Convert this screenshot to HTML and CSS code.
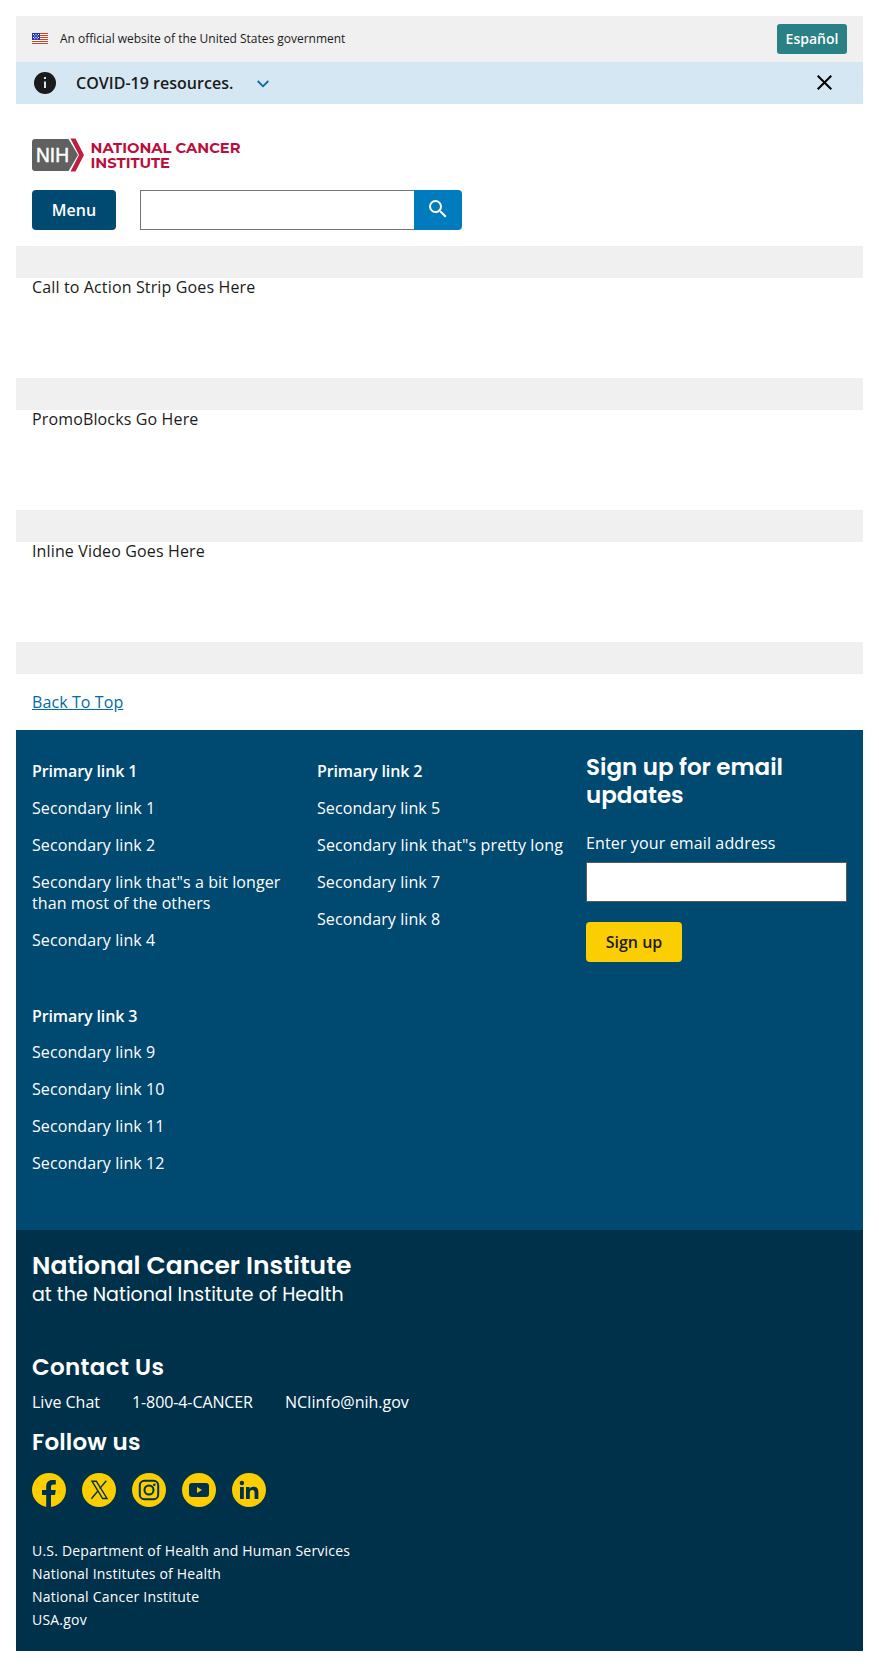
FILE: index.html
```html
<!DOCTYPE html>
<html lang="en">
<head>
<meta charset="utf-8">
<title>National Cancer Institute</title>
<link rel="stylesheet" href="styles.css">
</head>
<body>
<div class="page">
  <div class="banner">
    <svg class="flag" viewBox="0 0 16 11" shape-rendering="crispEdges"><path fill="#fff" d="M0 0h16v11H0z"/><path fill="#db3e1f" d="M0 0h16v1H0zM0 2h16v1H0zM0 4h16v1H0zM0 6h16v1H0zM0 8h16v1H0zM0 10h16v1H0z"/><path fill="#1e33b1" d="M0 0h8v7H0z"/><g fill="#fff" shape-rendering="auto"><path d="M1 1h1v1H1zM3.500 1h1v1h-1zM6 1h1v1H6zM2.200 2.500h1v1h-1zM4.700 2.500h1v1h-1zM1 4h1v1H1zM3.500 4h1v1h-1zM6 4h1v1H6zM2.200 5.300h1v1h-1zM4.700 5.300h1v1h-1z"/></g></svg>
    <span class="banner-text">An official website of the United States government</span>
    <a class="lang">Español</a>
  </div>
  <div class="alert">
    <svg class="info" viewBox="0 0 22 22"><circle cx="11" cy="11" r="11" fill="#1b1b1b"/><path fill="#d5e7f3" d="M10 5h2v2h-2zM10 9.500h2V16h-2z"/></svg>
    <span class="alert-title">COVID-19 resources.</span>
    <svg class="chevron" viewBox="0 0 12 8"><path d="M.7 1 6 6.300 11.300 1" fill="none" stroke="#006ba8" stroke-width="1.800"/></svg>
    <svg class="close" viewBox="0 0 15 15"><path d="m.7.7 13.600 13.600M14.300.7.7 14.300" stroke="#000" stroke-width="2"/></svg>
  </div>
  <header class="header">
    <svg class="logo" viewBox="0 0 210 34">
      <path fill="#606060" d="M3 1h33.500l9.500 16-9.500 16H3a3 3 0 0 1-3-3V4a3 3 0 0 1 3-3z"/>
      <path fill="#be1e3f" d="M38.500.500h5L52 17l-8.500 16.500h-5L47 17z"/>
      <text class="logo-nih" x="4" y="24" textLength="33" lengthAdjust="spacingAndGlyphs">NIH</text>
      <text class="logo-name" x="58.500" y="14.600" textLength="150" lengthAdjust="spacingAndGlyphs">NATIONAL CANCER</text>
      <text class="logo-name" x="58.500" y="30" textLength="79.500" lengthAdjust="spacingAndGlyphs">INSTITUTE</text>
    </svg>
    <div class="controls">
      <button class="btn menu">Menu</button>
      <div class="search">
        <input class="field search-field" type="text" aria-label="Search">
        <button class="search-btn" aria-label="Search"><svg viewBox="0 0 24 24" width="24" height="24"><path fill="#fff" d="M15.500 14h-.79l-.28-.27A6.470 6.470 0 0 0 16 9.500 6.500 6.500 0 1 0 9.500 16c1.610 0 3.090-.59 4.230-1.570l.27.28v.79l5 4.990L20.490 19l-4.990-5zm-6 0C7.010 14 5 11.990 5 9.500S7.010 5 9.500 5 14 7.010 14 9.500 11.990 14 9.500 14z"/></svg></button>
      </div>
    </div>
  </header>
  <main>
    <div class="strip"></div>
    <div class="slot">Call to Action Strip Goes Here</div>
    <div class="strip"></div>
    <div class="slot">PromoBlocks Go Here</div>
    <div class="strip"></div>
    <div class="slot">Inline Video Goes Here</div>
    <div class="strip"></div>
  </main>
  <footer>
    <div class="back"><a class="back-link" href="#">Back To Top</a></div>
    <div class="primary">
      <nav class="links">
        <ul class="group">
          <li class="group-title">Primary link 1</li><li>Secondary link 1</li><li>Secondary link 2</li><li>Secondary link that"s a bit longer than most of the others</li><li>Secondary link 4</li>
        </ul>
        <ul class="group">
          <li class="group-title">Primary link 2</li><li>Secondary link 5</li><li class="nowrap">Secondary link that"s pretty long</li><li>Secondary link 7</li><li>Secondary link 8</li>
        </ul>
        <ul class="group group-last">
          <li class="group-title">Primary link 3</li><li>Secondary link 9</li><li>Secondary link 10</li><li>Secondary link 11</li><li>Secondary link 12</li>
        </ul>
      </nav>
      <form class="signup">
        <h3 class="heading signup-title">Sign up for email updates</h3>
        <label class="label" for="email">Enter your email address</label>
        <input class="field email" id="email" type="text">
        <button class="btn submit" type="button">Sign up</button>
      </form>
    </div>
    <div class="secondary">
      <h3 class="heading org">National Cancer Institute</h3>
      <p class="parent">at the National Institute of Health</p>
      <h3 class="heading contact-title">Contact Us</h3>
      <div class="contact"><a>Live Chat</a><a class="phone">1-800-4-CANCER</a><a>NCIinfo@nih.gov</a></div>
      <h3 class="heading follow-title">Follow us</h3>
      <div class="social">
        <svg viewBox="0 0 34 34"><circle class="disc" cx="17" cy="17" r="17"/><path class="ink" d="M14.200 34V22H10v-5h4.200v-3.500c0-4.300 2.300-6.500 6.200-6.500h3.400v4.500h-2.300c-1.900 0-2.500 1-2.500 2.500v3h4.800l-.8 5h-4v12z"/></svg>
        <svg viewBox="0 0 34 34"><circle class="disc" cx="17" cy="17" r="17"/><path class="line" d="M10 8.200h4.300L25 25.500h-4.400z"/><path class="line" d="m24.300 7.800-6.600 7.800M15.600 18.200l-6.200 7.500"/></svg>
        <svg viewBox="0 0 34 34"><circle class="disc" cx="17" cy="17" r="17"/><rect class="bold-line" x="7.800" y="7.800" width="18.400" height="18.400" rx="4.500"/><circle class="bold-line" cx="17" cy="17" r="4.500"/><circle class="ink" cx="22.300" cy="11.700" r="1.300"/></svg>
        <svg viewBox="0 0 34 34"><circle class="disc" cx="17" cy="17" r="17"/><rect class="ink" x="7" y="10" width="20" height="14" rx="3"/><path class="disc" d="m15 14 5 3-5 3z"/></svg>
        <svg viewBox="0 0 34 34"><circle class="disc" cx="17" cy="17" r="17"/><circle class="ink" cx="9.900" cy="10" r="2.200"/><path class="ink" d="M8 14h3.800v12H8zM14 14h3.600v1.800c.8-1.400 2.200-2.100 3.900-2.100 3.700 0 4.900 2.200 4.900 5.700V26h-3.800v-5.800c0-1.700-.2-3.300-2.300-3.300s-2.500 1.500-2.500 3.200V26H14z"/></svg>
      </div>
      <ul class="agencies"><li>U.S. Department of Health and Human Services</li><li>National Institutes of Health</li><li>National Cancer Institute</li><li>USA.gov</li></ul>
    </div>
  </footer>
</div>
</body>
</html>
```
FILE: styles.css
```css
* { box-sizing: border-box; }
body { margin: 0; padding: 16px; background: #fff; color: #1b1b1b; font: 16px/18px "Open Sans", sans-serif; }
h3, p, ul { margin: 0; padding: 0; }
ul { list-style: none; }
svg { display: block; flex: none; }
button { border: 0; padding: 0; font: 600 16px/18px "Open Sans", sans-serif; }

.banner { display: flex; align-items: center; height: 46px; padding: 0 16px; background: #f0f0f0; }
.flag { width: 16px; height: 11px; margin: 0 12px 2px 0; }
.banner-text { font-size: 12px; letter-spacing: -.02px; }
.lang { margin-left: auto; width: 70px; height: 30px; border-radius: 3px; background: #298085; color: #fff; font-size: 14px; font-weight: 600; line-height: 30px; text-align: center; }

.alert { display: flex; align-items: center; height: 42px; padding: 0 31px 0 18px; background: #d5e7f3; }
.info { width: 22px; height: 22px; }
.alert-title { margin-left: 20px; font-weight: 600; letter-spacing: .02px; }
.chevron { width: 12px; height: 8px; margin: 1px 0 0 24px; }
.close { width: 15px; height: 15px; margin: 0 0 1px auto; }

.header { padding: 34px 16px 16px; }
.logo { width: 210px; height: 34px; }
.logo-nih { fill: #fff; font: 600 20px "Liberation Sans", sans-serif; stroke: #fff; stroke-width: .5px; }
.logo-name { fill: #bb0e3d; font: 700 15.200px Montserrat, Poppins, sans-serif; }
.controls { display: flex; gap: 24px; margin-top: 18px; }
.logo-nih { font-weight: 400; }
.btn { height: 40px; border-radius: 4px; }
.menu { width: 84px; background: #004971; color: #fff; }
.search { display: flex; }
.field { height: 40px; border: 1px solid #71767a; border-radius: 0; background: #fff; padding: 0 8px; }
.search-field { width: 275px; border-right: 0; }
.search-btn { display: flex; justify-content: center; width: 48px; height: 40px; padding-top: 7px; margin-left: -1px; border-radius: 0 4px 4px 0; background: #007bbd; }

.strip { height: 32px; background: #f0f0f0; }
.slot { height: 100px; padding: 0 16px; letter-spacing: .14px; }
.back { height: 56px; padding: 19px 16px 0; }
.back-link { color: #006ba8; letter-spacing: .09px; }

.primary { display: flex; height: 500px; padding: 0 16px; background: #004971; color: #fff; }
.links { display: grid; grid-template-columns: 253px 253px; column-gap: 32px; row-gap: 55px; align-content: start; width: 554px; padding-top: 31px; line-height: 21px; letter-spacing: .09px; }
.group { display: flex; flex-direction: column; gap: 16px; }
.group-title { font-weight: 600; letter-spacing: -.11px; }
.group-last .group-title { margin-bottom: -1px; }
.nowrap { white-space: nowrap; letter-spacing: .12px; }
.heading { font: 600 23px/28px Poppins, Inter, sans-serif; }
.signup { width: 261px; padding-top: 23px; }
.label { display: block; margin-top: 24px; line-height: 21px; letter-spacing: .13px; }
.email { display: block; width: 261px; margin-top: 8px; border-color: #565c65; }
.submit { display: block; width: 96px; margin-top: 20px; background: #face00; color: #1b1b1b; }

.secondary { height: 421px; padding: 22px 16px 0; background: #00314b; color: #fff; }
.org { font-size: 25px; line-height: 27px; letter-spacing: .03px; }
.parent { margin-top: 1px; font: 400 19px/29px Poppins, Inter, sans-serif; }
.contact-title { margin-top: 44px; letter-spacing: .35px; }
.contact { display: flex; gap: 32px; margin-top: 12px; line-height: 18px; }
.phone { letter-spacing: -.1px; }
.follow-title { margin-top: 17px; letter-spacing: .2px; }
.social { display: flex; gap: 16px; margin-top: 17px; }
.social svg { width: 34px; height: 34px; }
.disc { fill: #face00; }
.ink { fill: #00314b; }
.line { fill: none; stroke: #00314b; stroke-width: 1.400; }
.bold-line { fill: none; stroke: #00314b; stroke-width: 2; }
.agencies { margin-top: 32px; font-size: 14px; line-height: 23px; letter-spacing: .21px; }
```
